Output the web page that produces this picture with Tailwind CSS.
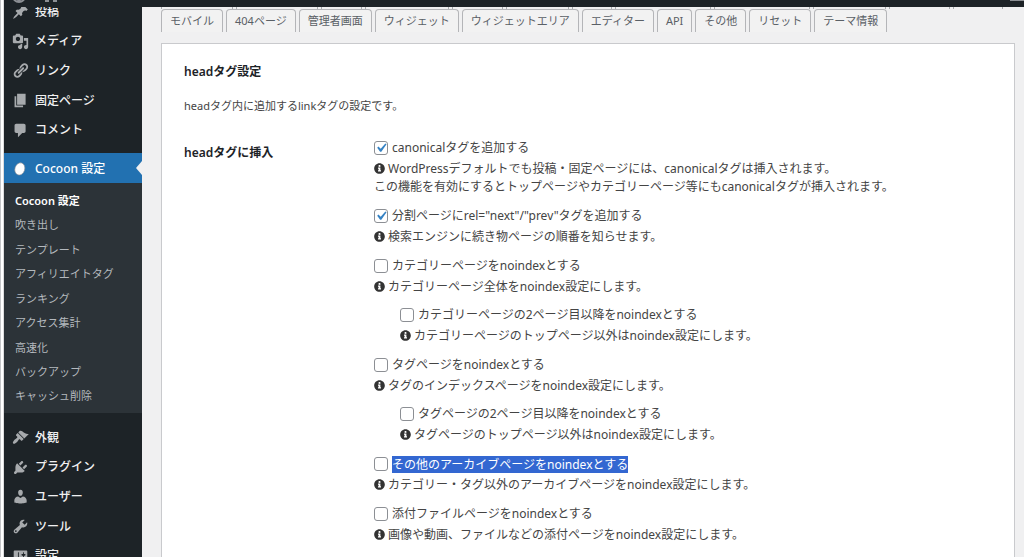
<!DOCTYPE html>
<html lang="ja">
<head>
  <meta charset="UTF-8" />
  <title>Cocoon 設定</title>
  <meta name="viewport" content="width=device-width, initial-scale=1.0" />
  <script src="https://cdn.jsdelivr.net/npm/@tailwindcss/browser@4"></script>
</head>
<body class="h-screen overflow-hidden flex flex-col bg-[#f0f0f1] font-['Noto_Sans','Noto_Sans_CJK_JP',sans-serif] text-xs text-[#50575e]">

  <!-- info アイコン -->
  <svg class="hidden">
    <symbol id="info" viewBox="0 0 512 512">
      <path d="M256 8C119.043 8 8 119.083 8 256c0 136.997 111.043 248 248 248s248-111.003 248-248C504 119.083 392.957 8 256 8zm0 90c28 0 48 18.804 48 44s-20 44-48 44-48-18.804-48-44 20-44 48-44zm70 290c0 6.627-5.373 12-12 12h-116c-6.627 0-12-5.373-12-12v-34c0-6.627 5.373-12 12-12h16v-74h-16c-6.627 0-12-5.373-12-12v-34c0-6.627 5.373-12 12-12h88c6.627 0 12 5.373 12 12v120h16c6.627 0 12 5.373 12 12v34z"/>
    </symbol>
    <symbol id="check" viewBox="0 0 20 20">
      <path d="M14.83 4.89l1.34.94-5.81 8.38H9.02L5.78 9.67l1.34-1.25 2.57 2.4z"/>
    </symbol>
  </svg>

  <!-- 管理バー -->
  <header class="relative z-10 ml-1 h-[7px] shrink-0 overflow-hidden bg-[#1d2327] flex items-start justify-between pl-2">
    <div class="flex gap-[18px]">
      <svg class="-mt-[11px] h-[14px] w-[14px]" viewBox="0 0 14 14" fill="none" stroke="#8c8f94" stroke-width="2"><circle cx="7" cy="7" r="6"/><path d="M4 9l3 3 3-3"/></svg>
      <svg class="-mt-[11px] h-[14px] w-[14px]" viewBox="0 0 14 14" fill="#8c8f94"><path d="M1 7l6-6 6 6v6H9v-3H5v3H1z"/></svg>
    </div>
    <span class="h-px w-[14px] bg-[#8c8f94]"></span>
  </header>

  <div class="flex flex-1 min-h-0">
    <div class="w-1 -mt-[7px] shrink-0 bg-white border-l border-r border-l-[#c3c4c7] border-r-[#dcdcde]"></div>

    <!-- サイドメニュー -->
    <nav class="w-[138px] -mt-[10px] shrink-0 bg-[#1d2327] text-[#f0f0f1] font-medium">
      <ul class="grid grid-rows-5 h-[148px]">
        <li><a href="#" class="flex h-full items-center gap-[6px] pl-2">
          <svg class="h-[17px] w-[17px] fill-[#a7aaad]" viewBox="0 0 20 20"><path d="M10.44 3.02l1.82-1.82 6.36 6.35-1.83 1.82c-1.05-.68-2.48-.57-3.41.36l-.75.75c-.92.93-1.04 2.35-.35 3.41l-1.83 1.82-2.41-2.41-2.8 2.79c-.42.42-3.38 2.71-3.8 2.29s1.86-3.39 2.28-3.81l2.79-2.79L4.1 9.36l1.83-1.82c1.05.69 2.48.57 3.4-.36l.75-.75c.93-.92 1.05-2.35.36-3.41z"/></svg>
          投稿</a></li>
        <li><a href="#" class="flex h-full items-center gap-[6px] pl-2">
          <svg class="h-[17px] w-[17px] fill-[#a7aaad]" viewBox="0 0 20 20"><path d="M13 11V4c0-.55-.45-1-1-1h-1.67L9 1H5L3.67 3H2c-.55 0-1 .45-1 1v7c0 .55.45 1 1 1h10c.55 0 1-.45 1-1zM7 4.5c1.38 0 2.5 1.12 2.5 2.5S8.38 9.5 7 9.5 4.5 8.38 4.5 7 5.62 4.5 7 4.5zM14 6h5v10.5c0 1.38-1.12 2.5-2.5 2.5S14 17.88 14 16.5s1.12-2.5 2.5-2.5c.17 0 .34.02.5.05V9h-3V6zm-4 8.05V13h2v3.5c0 1.38-1.12 2.5-2.5 2.5S7 17.88 7 16.5 8.12 14 9.5 14c.17 0 .34.02.5.05z"/></svg>
          メディア</a></li>
        <li><a href="#" class="flex h-full items-center gap-[6px] pl-2">
          <svg class="h-[17px] w-[17px] fill-[#a7aaad]" viewBox="0 0 20 20"><path d="M17.74 2.76c1.68 1.69 1.68 4.41 0 6.1l-1.53 1.52c-1.12 1.12-2.7 1.47-4.14 1.09l2.62-2.61.76-.77.76-.76c.84-.84.84-2.2 0-3.04-.84-.85-2.2-.85-3.04 0l-.77.76-3.38 3.38c-.37-1.44-.02-3.02 1.1-4.14l1.52-1.53c1.69-1.68 4.42-1.68 6.1 0zM8.59 13.43l5.34-5.34c.42-.42.42-1.1 0-1.52-.44-.43-1.13-.39-1.53 0l-5.33 5.34c-.42.42-.42 1.1 0 1.52.44.43 1.13.39 1.52 0zm-.76 2.29l4.14-4.15c.38 1.44.03 3.02-1.09 4.14l-1.52 1.53c-1.69 1.68-4.41 1.68-6.1 0-1.68-1.68-1.68-4.42 0-6.1l1.53-1.52c1.12-1.12 2.7-1.47 4.14-1.1l-4.14 4.15c-.85.84-.85 2.2 0 3.05.84.84 2.2.84 3.04 0z"/></svg>
          リンク</a></li>
        <li><a href="#" class="flex h-full items-center gap-[6px] pl-2">
          <svg class="h-[17px] w-[17px] fill-[#a7aaad]" viewBox="0 0 20 20"><path d="M6 15V2h10v13H6zm-1 1h8v2H3V5h2v11z"/></svg>
          固定ページ</a></li>
        <li><a href="#" class="flex h-full items-center gap-[6px] pl-2">
          <svg class="h-[17px] w-[17px] fill-[#a7aaad]" viewBox="0 0 20 20"><path d="M5 2h9c1.1 0 2 .9 2 2v7c0 1.1-.9 2-2 2h-2l-5 5v-5H5c-1.1 0-2-.9-2-2V4c0-1.1.9-2 2-2z"/></svg>
          コメント</a></li>
      </ul>

      <!-- Cocoon 設定 (現在のメニュー) -->
      <a href="#" class="relative mt-2 flex h-[30px] items-center gap-[7px] bg-[#2271b1] pl-2 pt-px text-white">
        <svg class="h-4 w-4" viewBox="0 0 16 16"><ellipse cx="7.8" cy="8" rx="4.9" ry="6.2" fill="#fff" stroke="#8b8f94" stroke-width=".6" transform="rotate(18 8 8)"/></svg>
        Cocoon 設定
        <svg class="absolute right-0 top-2 h-[14px] w-[6px] fill-[#f0f0f1]" viewBox="0 0 6 14"><path d="M6 0v14L0 7z"/></svg>
      </a>
      <div class="bg-[#2c3338] pt-[6px] pb-1">
        <ul class="grid grid-rows-9 h-[220px] items-center pl-[11px] text-[11px] font-normal text-[#b4b9be]">
          <li><a href="#" class="font-semibold text-white">Cocoon 設定</a></li>
          <li><a href="#">吹き出し</a></li>
          <li><a href="#">テンプレート</a></li>
          <li><a href="#">アフィリエイトタグ</a></li>
          <li><a href="#">ランキング</a></li>
          <li><a href="#">アクセス集計</a></li>
          <li><a href="#">高速化</a></li>
          <li><a href="#">バックアップ</a></li>
          <li><a href="#">キャッシュ削除</a></li>
        </ul>
      </div>

      <ul class="mt-[10px] grid grid-rows-5 h-[148px]">
        <li><a href="#" class="flex h-full items-center gap-[6px] pl-2">
          <svg class="h-[17px] w-[17px] fill-[#a7aaad]" viewBox="0 0 20 20"><path d="M14.48 11.06L7.41 3.99l1.5-1.5c.5-.56 2.3-.47 3.51.32 1.21.8 1.43 1.28 2.91 2.1 1.18.64 2.45 1.26 4.45.85zm-.71.71L6.7 4.7 4.93 6.47c-.39.39-.39 1.02 0 1.41l1.06 1.06c.39.39.39 1.03 0 1.42-.6.6-1.43 1.11-2.21 1.69-.35.26-.7.53-1.01.84C1.43 14.23.4 16.08 1.4 17.07c.99 1 2.84-.03 4.18-1.36.31-.31.58-.66.85-1.02.57-.78 1.08-1.61 1.69-2.21.39-.39 1.02-.39 1.41 0l1.06 1.06c.39.39 1.02.39 1.41 0z"/></svg>
          外観</a></li>
        <li><a href="#" class="flex h-full items-center gap-[6px] pl-2">
          <svg class="h-[17px] w-[17px] fill-[#a7aaad]" viewBox="0 0 20 20"><path d="M13.11 4.36L9.87 7.6 8 5.73l3.24-3.24c.35-.34 1.05-.2 1.56.32.52.51.66 1.21.31 1.55zm-8 1.77l.91-1.12 9.01 9.01-1.19.84c-.71.71-2.63 1.16-3.82 1.16H6.14L4.9 17.26c-.59.59-1.54.59-2.12 0-.59-.58-.59-1.53 0-2.12l1.24-1.24v-3.88c0-1.13.4-3.19 1.09-3.89zm7.26 3.97l3.24-3.24c.34-.35 1.04-.21 1.55.31.52.51.66 1.21.31 1.55l-3.24 3.25z"/></svg>
          プラグイン</a></li>
        <li><a href="#" class="flex h-full items-center gap-[6px] pl-2">
          <svg class="h-[17px] w-[17px] fill-[#a7aaad]" viewBox="0 0 20 20"><path d="M10 9.25c-2.27 0-2.73-3.44-2.73-3.44C7 4.02 7.82 2 9.97 2c2.16 0 2.98 2.02 2.71 3.81 0 0-.41 3.44-2.68 3.44zm0 2.57L12.72 10c2.39 0 4.52 2.33 4.52 4.53v2.49s-3.65 1.13-7.24 1.13c-3.65 0-7.24-1.13-7.24-1.13v-2.49c0-2.25 1.94-4.48 4.47-4.48z"/></svg>
          ユーザー</a></li>
        <li><a href="#" class="flex h-full items-center gap-[6px] pl-2">
          <svg class="h-[17px] w-[17px] fill-[#a7aaad]" viewBox="0 0 20 20"><path d="M16.68 9.77c-1.34 1.34-3.3 1.67-4.95.99l-5.41 6.52c-.99.99-2.59.99-3.58 0s-.99-2.59 0-3.57l6.52-5.42c-.68-1.65-.35-3.61.99-4.95 1.28-1.28 3.12-1.62 4.72-1.06l-2.89 2.89 2.82 2.82 2.86-2.87c.53 1.58.18 3.39-1.08 4.65zM3.81 16.21c.4.39 1.04.39 1.43 0 .4-.4.4-1.04 0-1.43-.39-.4-1.03-.4-1.43 0-.39.39-.39 1.03 0 1.43z"/></svg>
          ツール</a></li>
        <li><a href="#" class="flex h-full items-center gap-[6px] pl-2">
          <svg class="h-[17px] w-[17px] fill-[#a7aaad]" viewBox="0 0 20 20"><path d="M18 16V4c0-.55-.45-1-1-1H3c-.55 0-1 .45-1 1v12c0 .55.45 1 1 1h14c.55 0 1-.45 1-1zM8 11h1c.55 0 1 .45 1 1s-.45 1-1 1H8v1.5c0 .28-.22.5-.5.5s-.5-.22-.5-.5V13H6c-.55 0-1-.45-1-1s.45-1 1-1h1V5.5c0-.28.22-.5.5-.5s.5.22.5.5V11zm5-2h-1c-.55 0-1-.45-1-1s.45-1 1-1h1V5.5c0-.28.22-.5.5-.5s.5.22.5.5V7h1c.55 0 1 .45 1 1s-.45 1-1 1h-1v5.5c0 .28-.22.5-.5.5s-.5-.22-.5-.5V9z"/></svg>
          設定</a></li>
      </ul>
    </nav>

    <main class="flex flex-1 min-w-0 flex-col pl-[19px] pr-[9px]">
      <!-- 上の段のタブの下端 -->
      <div class="flex h-[2px] shrink-0 gap-[3px] overflow-hidden" aria-hidden="true">
        <span class="w-[72px] shrink-0 border-x border-[#a7aaad]"></span>
        <span class="w-[82px] shrink-0 border-x border-[#a7aaad]"></span>
        <span class="w-[41px] shrink-0 border-x border-[#a7aaad]"></span>
        <span class="w-[84px] shrink-0 border-x border-[#a7aaad]"></span>
        <span class="w-[51px] shrink-0 border-x border-[#a7aaad]"></span>
        <span class="w-[63px] shrink-0 border-x border-[#a7aaad]"></span>
        <span class="w-[40px] shrink-0 border-x border-[#a7aaad]"></span>
        <span class="w-[96px] shrink-0 border-x border-[#a7aaad]"></span>
        <span class="w-[96px] shrink-0 border-x border-[#a7aaad]"></span>
        <span class="w-[73px] shrink-0 border-x border-[#a7aaad]"></span>
        <span class="w-[61px] shrink-0 border-x border-[#a7aaad]"></span>
        <span class="w-[50px] shrink-0 border-x border-[#a7aaad]"></span>
      </div>

      <!-- タブ -->
      <div class="flex gap-[3px] whitespace-nowrap text-[11px] leading-[22px] text-[#5a6066]">
        <a href="#" class="rounded-t border border-b-0 border-[#b4b5b8] bg-[#f2f2f2] px-2">モバイル</a>
        <a href="#" class="rounded-t border border-b-0 border-[#b4b5b8] bg-[#f2f2f2] px-2">404ページ</a>
        <a href="#" class="rounded-t border border-b-0 border-[#b4b5b8] bg-[#f2f2f2] px-2">管理者画面</a>
        <a href="#" class="rounded-t border border-b-0 border-[#b4b5b8] bg-[#f2f2f2] px-2">ウィジェット</a>
        <a href="#" class="rounded-t border border-b-0 border-[#b4b5b8] bg-[#f2f2f2] px-2">ウィジェットエリア</a>
        <a href="#" class="rounded-t border border-b-0 border-[#b4b5b8] bg-[#f2f2f2] px-2">エディター</a>
        <a href="#" class="rounded-t border border-b-0 border-[#b4b5b8] bg-[#f2f2f2] px-2">API</a>
        <a href="#" class="rounded-t border border-b-0 border-[#b4b5b8] bg-[#f2f2f2] px-2">その他</a>
        <a href="#" class="rounded-t border border-b-0 border-[#b4b5b8] bg-[#f2f2f2] px-2">リセット</a>
        <a href="#" class="rounded-t border border-b-0 border-[#b4b5b8] bg-[#f2f2f2] px-2">テーマ情報</a>
      </div>

      <section class="mt-[11px] flex-1 border border-b-0 border-[#c9cacd] bg-white px-[22px] pt-[19px] leading-[18px] text-[#444]">
        <h2 class="font-semibold text-[#1d2327]">headタグ設定</h2>
        <p class="mt-4 text-[11px]">headタグ内に追加するlinkタグの設定です。</p>

        <div class="mt-[23px] flex" role="group" aria-labelledby="head-insert">
          <h3 id="head-insert" class="w-[190px] shrink-0 pt-[6px] font-semibold text-[#1d2327]">headタグに挿入</h3>

          <div class="flex flex-col gap-[10px]">
            <div>
              <label class="flex h-5 items-center gap-1">
                <span class="relative h-[14px] w-[14px]">
                  <input type="checkbox" checked class="peer block h-[14px] w-[14px] appearance-none rounded-[3px] border border-[#8c8f94] bg-white" />
                  <svg class="pointer-events-none absolute -left-[2px] -top-[2px] hidden h-[18px] w-[18px] fill-[#3582c4] peer-checked:block"><use href="#check"/></svg>
                </span>
                canonicalタグを追加する
              </label>
              <p class="mt-[2px]"><svg class="mr-[3px] mb-[2px] inline-block h-[11px] w-[11px] fill-[#333]"><use href="#info"/></svg>WordPressデフォルトでも投稿・固定ページには、canonicalタグは挿入されます。<br />この機能を有効にするとトップページやカテゴリーページ等にもcanonicalタグが挿入されます。</p>
            </div>

            <div>
              <label class="flex h-5 items-center gap-1">
                <span class="relative h-[14px] w-[14px]">
                  <input type="checkbox" checked class="peer block h-[14px] w-[14px] appearance-none rounded-[3px] border border-[#8c8f94] bg-white" />
                  <svg class="pointer-events-none absolute -left-[2px] -top-[2px] hidden h-[18px] w-[18px] fill-[#3582c4] peer-checked:block"><use href="#check"/></svg>
                </span>
                分割ページにrel="next"/"prev"タグを追加する
              </label>
              <p class="mt-[2px]"><svg class="mr-[3px] mb-[2px] inline-block h-[11px] w-[11px] fill-[#333]"><use href="#info"/></svg>検索エンジンに続き物ページの順番を知らせます。</p>
            </div>

            <div>
              <label class="flex h-5 items-center gap-1">
                <input type="checkbox" class="h-[14px] w-[14px] appearance-none rounded-[3px] border border-[#8c8f94] bg-white" />
                カテゴリーページをnoindexとする
              </label>
              <p class="mt-[2px]"><svg class="mr-[3px] mb-[2px] inline-block h-[11px] w-[11px] fill-[#333]"><use href="#info"/></svg>カテゴリーページ全体をnoindex設定にします。</p>
              <div class="mt-[9px] pl-[26px]">
                <label class="flex h-5 items-center gap-1">
                  <input type="checkbox" class="h-[14px] w-[14px] appearance-none rounded-[3px] border border-[#8c8f94] bg-white" />
                  カテゴリーページの2ページ目以降をnoindexとする
                </label>
                <p class="mt-[2px]"><svg class="mr-[3px] mb-[2px] inline-block h-[11px] w-[11px] fill-[#333]"><use href="#info"/></svg>カテゴリーページのトップページ以外はnoindex設定にします。</p>
              </div>
            </div>

            <div>
              <label class="flex h-5 items-center gap-1">
                <input type="checkbox" class="h-[14px] w-[14px] appearance-none rounded-[3px] border border-[#8c8f94] bg-white" />
                タグページをnoindexとする
              </label>
              <p class="mt-[2px]"><svg class="mr-[3px] mb-[2px] inline-block h-[11px] w-[11px] fill-[#333]"><use href="#info"/></svg>タグのインデックスページをnoindex設定にします。</p>
              <div class="mt-[9px] pl-[26px]">
                <label class="flex h-5 items-center gap-1">
                  <input type="checkbox" class="h-[14px] w-[14px] appearance-none rounded-[3px] border border-[#8c8f94] bg-white" />
                  タグページの2ページ目以降をnoindexとする
                </label>
                <p class="mt-[2px]"><svg class="mr-[3px] mb-[2px] inline-block h-[11px] w-[11px] fill-[#333]"><use href="#info"/></svg>タグページのトップページ以外はnoindex設定にします。</p>
              </div>
            </div>

            <div>
              <label class="flex h-5 items-center gap-1">
                <input type="checkbox" class="h-[14px] w-[14px] appearance-none rounded-[3px] border border-[#8c8f94] bg-white" />
                <span class="bg-[#3367d1] leading-[17px] text-white">その他のアーカイブページをnoindexとする</span>
              </label>
              <p class="mt-[2px]"><svg class="mr-[3px] mb-[2px] inline-block h-[11px] w-[11px] fill-[#333]"><use href="#info"/></svg>カテゴリー・タグ以外のアーカイブページをnoindex設定にします。</p>
            </div>

            <div>
              <label class="flex h-5 items-center gap-1">
                <input type="checkbox" class="h-[14px] w-[14px] appearance-none rounded-[3px] border border-[#8c8f94] bg-white" />
                添付ファイルページをnoindexとする
              </label>
              <p class="mt-[2px]"><svg class="mr-[3px] mb-[2px] inline-block h-[11px] w-[11px] fill-[#333]"><use href="#info"/></svg>画像や動画、ファイルなどの添付ページをnoindex設定にします。</p>
            </div>
          </div>
        </div>
      </section>
    </main>
  </div>
</body>
</html>
